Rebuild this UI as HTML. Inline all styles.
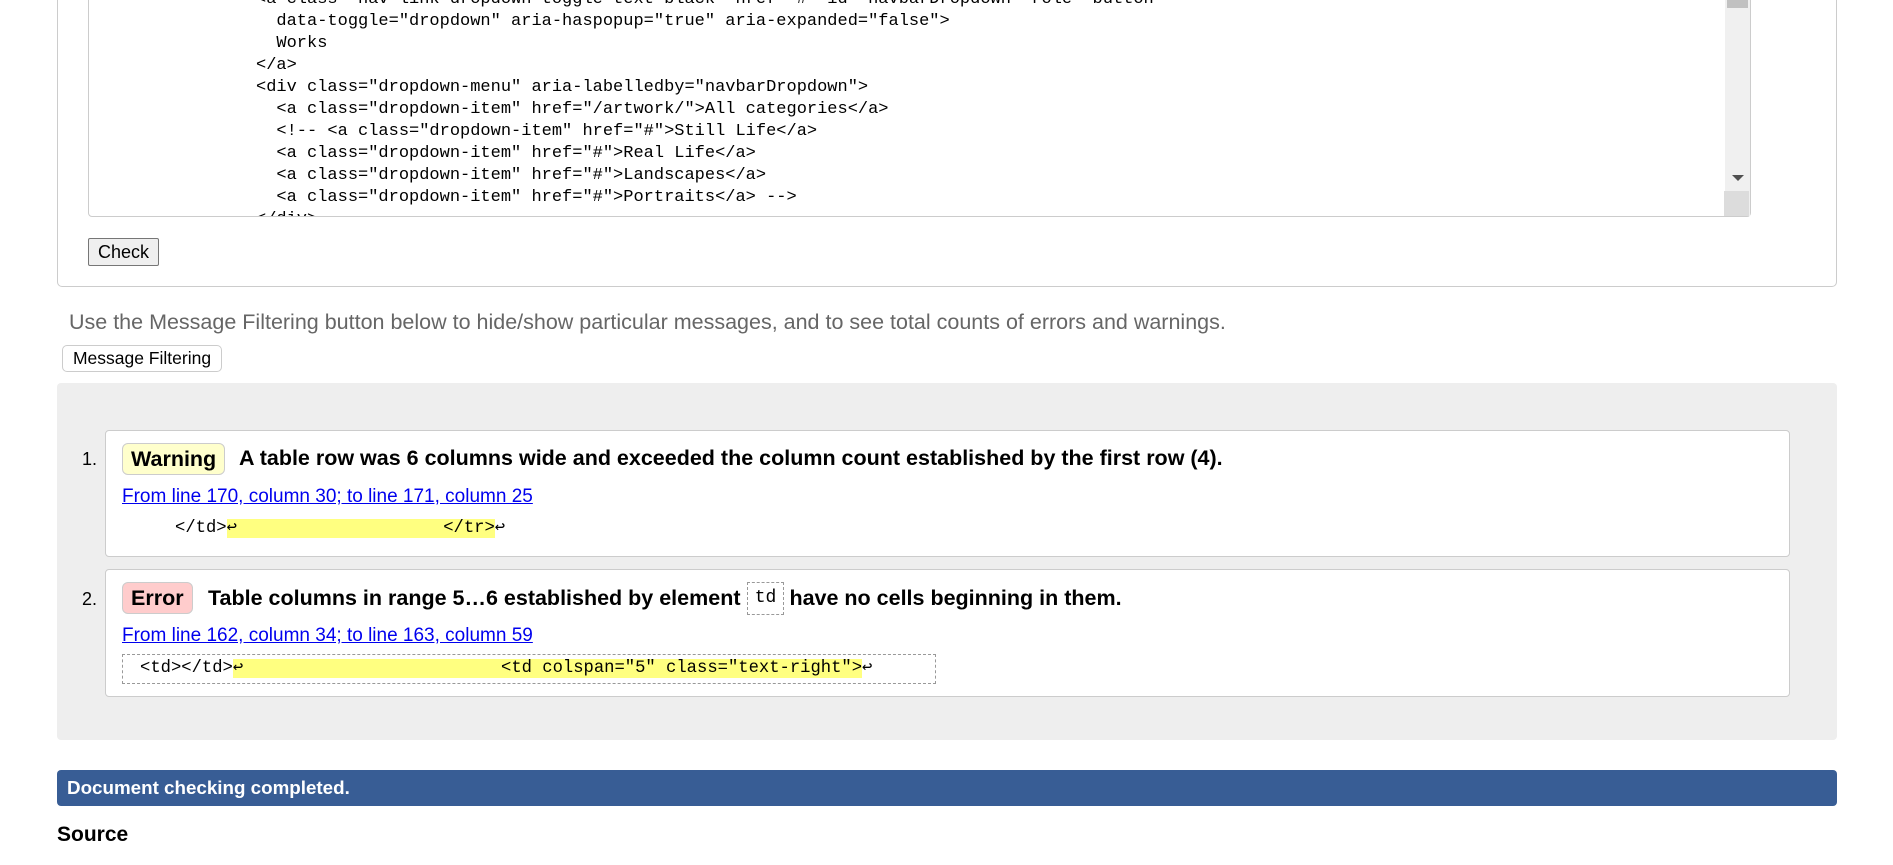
<!DOCTYPE html>
<html><head><meta charset="utf-8"><style>
*{box-sizing:border-box;margin:0;padding:0}
body{width:1893px;height:865px;overflow:hidden;background:#fff;font-family:"Liberation Sans",Arial,sans-serif;position:relative;color:#000}
.abs{position:absolute}
.fs{left:57px;top:-20px;width:1780px;height:307px;border:1px solid #ccc;border-radius:5px}
.ta{left:88px;top:-10px;width:1663px;height:227px;border:1px solid #ccc;border-radius:4px;overflow:hidden}
.code{font-family:"Liberation Mono",monospace;font-size:17px;white-space:pre;line-height:22px}
.sb{left:1725px;top:-10px;width:25px;height:226px;background:#f0f0f0}
.btn{background:#efefef;border:1px solid #767676;border-radius:2px;font-size:18px;text-align:center}
.panel{left:57px;top:383px;width:1780px;height:357px;background:#eee;border-radius:4px}
.msg{left:105px;width:1685px;background:#fff;border:1px solid #ccc;border-radius:4px}
.num{font-size:18px}
.badge{font-weight:bold;font-size:21.5px;border:1px solid #ccc;border-radius:6px;line-height:30px;padding:0 8px}
.mt{font-weight:bold;font-size:21.5px}
a{color:#00e;text-decoration:underline;font-size:19px}
.hl{background:#ffff80}
</style></head><body>
<div class="abs fs"></div>
<div class="abs ta">
<div class="abs code" style="left:167px;top:-2px">&lt;a class="nav-link dropdown-toggle text-black" href="#" id="navbarDropdown" role="button"
  data-toggle="dropdown" aria-haspopup="true" aria-expanded="false">
  Works
&lt;/a>
&lt;div class="dropdown-menu" aria-labelledby="navbarDropdown">
  &lt;a class="dropdown-item" href="/artwork/">All categories&lt;/a>
  &lt;!-- &lt;a class="dropdown-item" href="#">Still Life&lt;/a>
  &lt;a class="dropdown-item" href="#">Real Life&lt;/a>
  &lt;a class="dropdown-item" href="#">Landscapes&lt;/a>
  &lt;a class="dropdown-item" href="#">Portraits&lt;/a> -->
&lt;/div></div>
</div>
<div class="abs sb"></div>
<div class="abs" style="left:1727px;top:-2px;width:21px;height:10px;background:#c1c1c1"></div>
<div class="abs" style="left:1732px;top:175px;width:0;height:0;border-left:6px solid transparent;border-right:6px solid transparent;border-top:6px solid #505050"></div>
<div class="abs" style="left:1724px;top:191px;width:25px;height:25px;background:#dcdcdc"></div>
<div class="abs btn" style="left:88px;top:238px;width:71px;height:28px;line-height:26px">Check</div>
<div class="abs" style="left:69px;top:310px;font-size:21.5px;color:#666">Use the Message Filtering button below to hide/show particular messages, and to see total counts of errors and warnings.</div>
<div class="abs btn" style="left:62px;top:345px;width:160px;height:27px;line-height:25px;font-size:17.5px;border-color:#ccc;border-radius:5px;background:#fff">Message Filtering</div>
<div class="abs panel"></div>
<div class="abs msg" style="top:430px;height:127px"></div>
<div class="abs num" style="left:82px;top:449px">1.</div>
<div class="abs badge" style="left:122px;top:443px;background:#ffffcc">Warning</div>
<div class="abs mt" style="left:239px;top:446px">A table row was 6 columns wide and exceeded the column count established by the first row (4).</div>
<a class="abs" style="left:122px;top:486px">From line 170, column 30; to line 171, column 25</a>
<div class="abs code" style="left:175px;top:518px;font-size:17.2px">&lt;/td><span class="hl">↩                    &lt;/tr></span>↩</div>
<div class="abs msg" style="top:569px;height:128px"></div>
<div class="abs num" style="left:82px;top:589px">2.</div>
<div class="abs badge" style="left:122px;top:582px;background:#ffcccc">Error</div>
<div class="abs mt" style="left:208px;top:586px">Table columns in range 5…6 established by element <span style="display:inline-block;width:37px"></span> have no cells beginning in them.</div>
<div class="abs code" style="left:747px;top:582px;width:37px;height:33px;border:1px dashed #999;text-align:center;line-height:31px;font-size:18px">td</div>
<a class="abs" style="left:122px;top:625px">From line 162, column 34; to line 163, column 59</a>
<div class="abs" style="left:122px;top:654px;width:814px;height:30px;border:1px dashed #999"></div>
<div class="abs code" style="left:140px;top:658px;font-size:17.2px">&lt;td>&lt;/td><span class="hl">↩                         &lt;td colspan="5" class="text-right"></span>↩</div>
<div class="abs" style="left:57px;top:770px;width:1780px;height:36px;background:#385d95;border-radius:4px;color:#fff;font-weight:bold;font-size:18.8px;padding-left:10px;line-height:36px">Document checking completed.</div>
<div class="abs" style="left:57px;top:823px;font-weight:bold;font-size:21px">Source</div>
</body></html>
